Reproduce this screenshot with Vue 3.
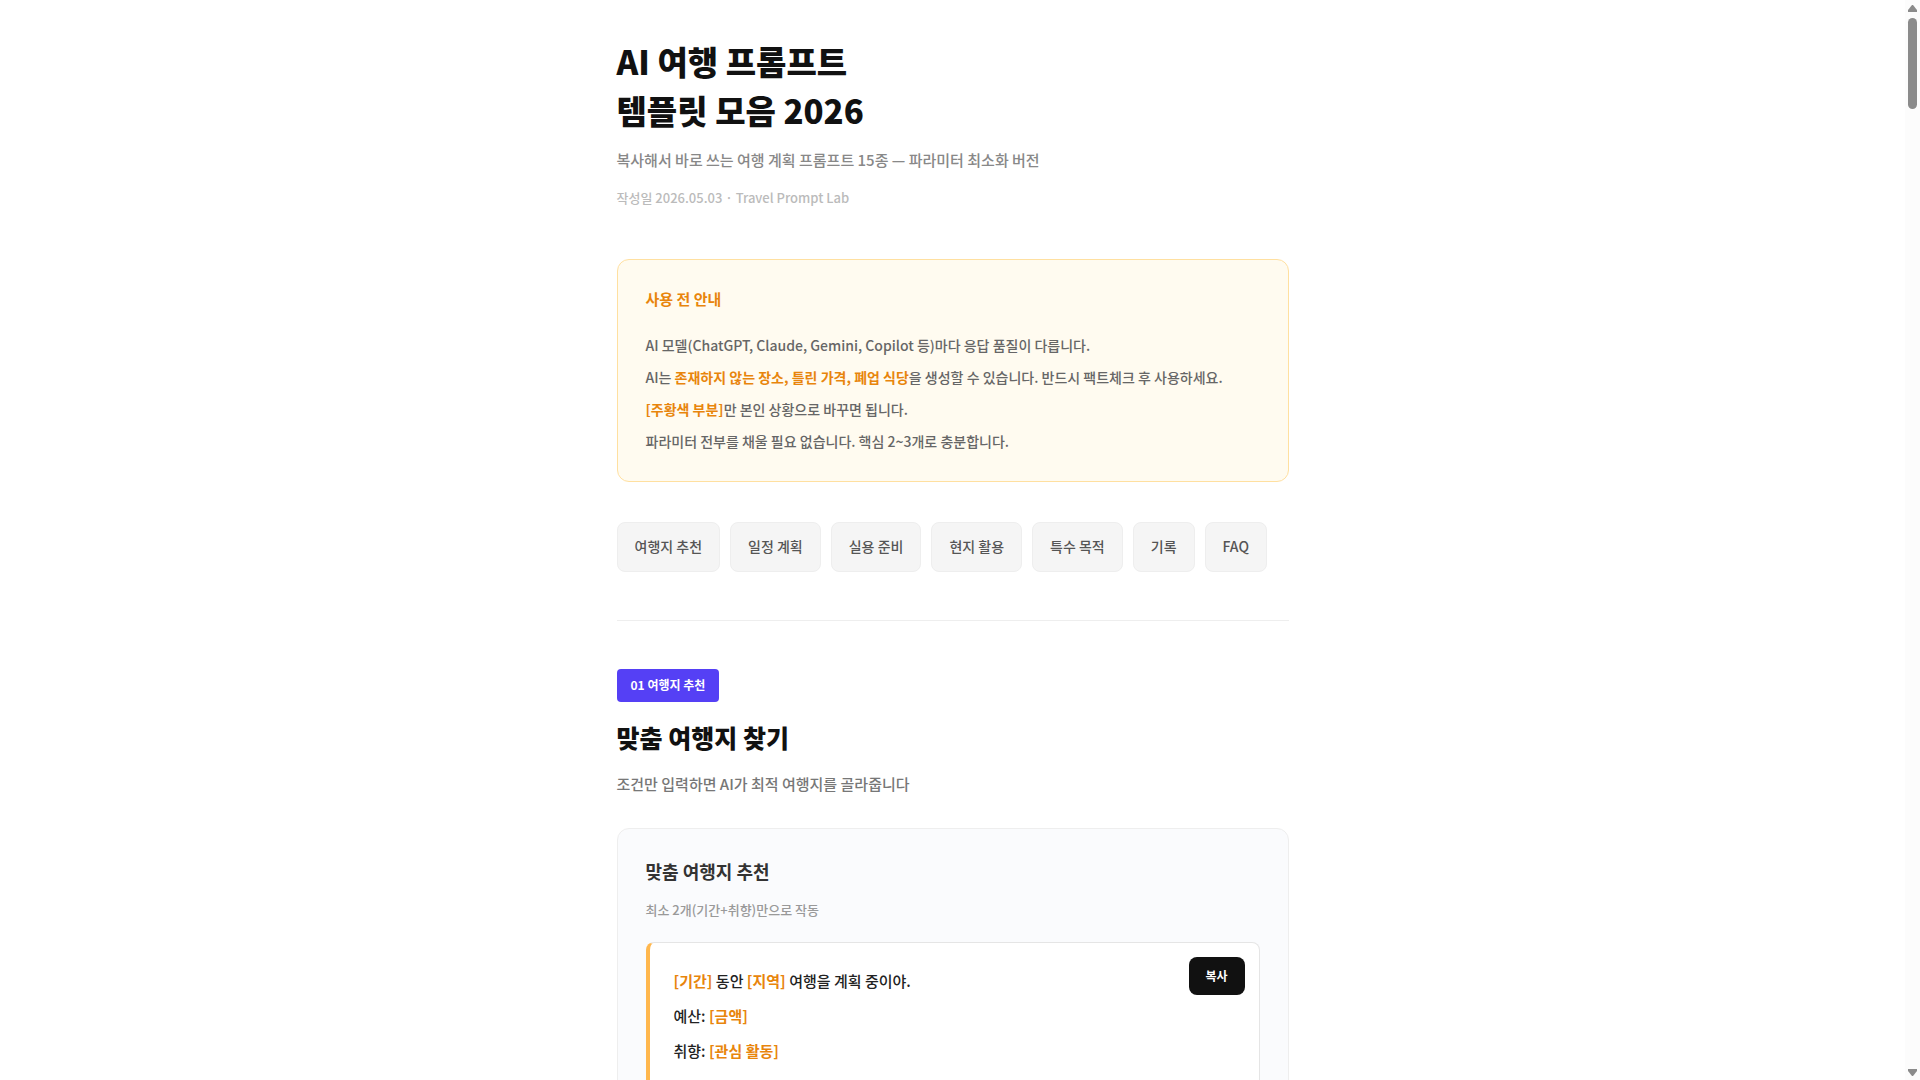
<script setup>
const notices = [
  [{ t: 'AI 모델(ChatGPT, Claude, Gemini, Copilot 등)마다 응답 품질이 다릅니다.' }],
  [
    { t: 'AI는 ' },
    { t: '존재하지 않는 장소, 틀린 가격, 폐업 식당', hot: true },
    { t: '을 생성할 수 있습니다. 반드시 팩트체크 후 사용하세요.' },
  ],
  [{ t: '[주황색 부분]', hot: true }, { t: '만 본인 상황으로 바꾸면 됩니다.' }],
  [{ t: '파라미터 전부를 채울 필요 없습니다. 핵심 2~3개로 충분합니다.' }],
]

const sections = ['여행지 추천', '일정 계획', '실용 준비', '현지 활용', '특수 목적', '기록', 'FAQ']

const promptLines = [
  [
    { t: '[기간]', hot: true },
    { t: ' 동안 ' },
    { t: '[지역]', hot: true },
    { t: ' 여행을 계획 중이야.' },
  ],
  [{ t: '예산: ' }, { t: '[금액]', hot: true }],
  [{ t: '취향: ' }, { t: '[관심 활동]', hot: true }],
]
</script>

<template>
  <div class="viewport">
    <div class="scroller">
      <main class="page">
        <header>
          <h1>AI 여행 프롬프트<br />템플릿 모음 2026</h1>
          <p class="subtitle">복사해서 바로 쓰는 여행 계획 프롬프트 15종 — 파라미터 최소화 버전</p>
          <p class="meta">작성일 2026.05.03 · Travel Prompt Lab</p>
        </header>

        <section class="notice">
          <h2 class="notice-title">사용 전 안내</h2>
          <p v-for="(line, i) in notices" :key="i" class="notice-line">
            <span v-for="(part, j) in line" :key="j" :class="{ hot: part.hot }">{{ part.t }}</span>
          </p>
        </section>

        <nav class="toc">
          <a v-for="(name, i) in sections" :key="name" :href="'#s' + (i + 1)">{{ name }}</a>
        </nav>

        <section id="s1" class="group">
          <span class="badge">01 여행지 추천</span>
          <h2 class="group-title">맞춤 여행지 찾기</h2>
          <p class="group-desc">조건만 입력하면 AI가 최적 여행지를 골라줍니다</p>

          <article class="card">
            <h3>맞춤 여행지 추천</h3>
            <p class="card-hint">최소 2개(기간+취향)만으로 작동</p>
            <div class="prompt">
              <button type="button" class="copy">복사</button>
              <p v-for="(line, i) in promptLines" :key="i" class="prompt-line">
                <span v-for="(part, j) in line" :key="j" :class="{ hot: part.hot }">{{ part.t }}</span>
              </p>
            </div>
          </article>
        </section>
      </main>
    </div>
    <div class="scrollbar" aria-hidden="true">
      <svg width="9" height="7" viewBox="0 0 9 7"><path d="M4 0H5L9 5V7H0V5Z" /></svg>
      <div class="thumb"></div>
      <svg width="9" height="7" viewBox="0 0 9 7"><path d="M0 0H9V2L5 7H4L0 2Z" /></svg>
    </div>
  </div>
</template>

<style>
body {
  margin: 0;
  background: #fff;
}
</style>

<style scoped>
.viewport {
  display: flex;
  height: 100vh;
  overflow: hidden;
  font-family: 'Noto Sans CJK KR', 'Noto Sans', sans-serif;
  font-weight: 500;
  color: #222;
}
.scroller {
  flex: 1;
  overflow: hidden;
}
.page {
  box-sizing: border-box;
  max-width: 720px;
  margin: 0 auto;
  padding: 37px 24px 0;
}
h1,
h2,
h3,
p {
  margin: 0;
}
h1 {
  font-size: 33px;
  line-height: 49px;
  font-weight: 900;
  color: #111;
}
.subtitle {
  margin-top: 10px;
  font-size: 15px;
  line-height: 30px;
  color: #888;
}
.meta {
  margin-top: 10px;
  font-size: 13px;
  line-height: 26px;
  color: #bbb;
}
.notice {
  margin-top: 48px;
  padding: 24px 28px;
  border: 1px solid #ffe0a0;
  border-radius: 12px;
  background: #fffbf0;
}
.notice-title {
  margin-bottom: 15px;
  font-size: 15px;
  line-height: 30px;
  font-weight: 700;
  color: #e8850c;
}
.notice-line {
  font-size: 14px;
  line-height: 32px;
  color: #666;
}
.notice-line,
.prompt-line {
  white-space: pre-wrap;
}
.hot {
  font-weight: 700;
  color: #e8850c;
}
.toc {
  display: flex;
  flex-wrap: wrap;
  gap: 10px;
  margin-top: 40px;
}
.toc a {
  padding: 0 17px 2px;
  border: 1px solid #eee;
  border-radius: 8px;
  background: #f5f5f5;
  font-size: 14px;
  line-height: 46px;
  color: #555;
  text-decoration: none;
}
.group {
  margin-top: 48px;
  padding-top: 48px;
  border-top: 1px solid #eee;
}
.badge {
  display: block;
  width: fit-content;
  padding: 0 14px 2px;
  border-radius: 4px;
  background: #5540f5;
  font-size: 12px;
  line-height: 31px;
  font-weight: 700;
  color: #fff;
}
.group-title {
  margin-top: 15px;
  font-size: 25px;
  line-height: 40px;
  font-weight: 900;
  color: #111;
}
.group-desc {
  margin-top: 12px;
  font-size: 15px;
  line-height: 30px;
  color: #777;
}
.card {
  margin-top: 29px;
  padding: 27px 28px;
  border: 1px solid #eee;
  border-radius: 12px;
  background: #fafbfd;
}
.card h3 {
  font-size: 18px;
  line-height: 30px;
  font-weight: 700;
  color: #333;
}
.card-hint {
  margin-top: 11px;
  font-size: 13px;
  line-height: 26px;
  color: #999;
}
.prompt {
  position: relative;
  min-height: 180px;
  margin-top: 19px;
  padding: 20px 24px;
  border: 1px solid #e5e5e5;
  border-left: 4px solid #ffb74d;
  border-radius: 8px;
  background: #fff;
}
.prompt-line {
  font-size: 15px;
  line-height: 35px;
  color: #222;
}
.copy {
  position: absolute;
  top: 14px;
  right: 14px;
  width: 56px;
  height: 38px;
  padding: 0 0 2px;
  border: 0;
  border-radius: 8px;
  background: #111;
  font-family: inherit;
  font-size: 12px;
  font-weight: 700;
  color: #fff;
}
.scrollbar {
  box-sizing: border-box;
  display: flex;
  flex-direction: column;
  align-items: center;
  width: 15px;
  padding: 5px 0 4px;
  background: #fcfcfc;
}
.scrollbar svg {
  fill: #8b8b8b;
}
.scrollbar svg:last-child {
  margin-top: auto;
}
.thumb {
  width: 9px;
  height: 91px;
  margin-top: 6px;
  border-radius: 5px;
  background: #8b8b8b;
}
</style>
